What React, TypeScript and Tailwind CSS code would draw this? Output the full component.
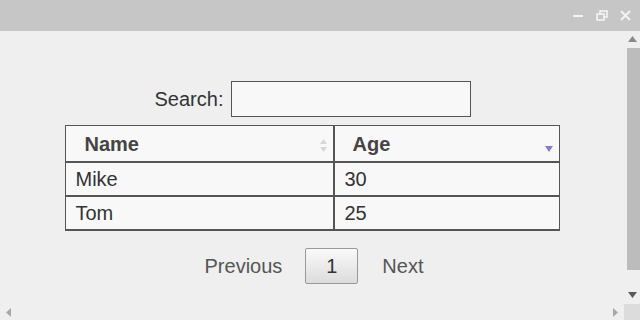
import React from "react";

const rows = [
  { name: "Mike", age: 30 },
  { name: "Tom", age: 25 },
];

function TitleBar() {
  return (
    <div className="flex h-[31px] items-center justify-end gap-[12px] bg-[#c6c6c6] pr-[9px]">
      <svg width="11" height="11" viewBox="0 0 11 11">
        <rect x="0" y="5" width="10" height="2" fill="#f4f4f4" />
      </svg>
      <svg width="12" height="11" viewBox="0 0 12 11">
        <rect x="4" y="1" width="7" height="6" fill="none" stroke="#f4f4f4" strokeWidth="1.6" />
        <rect x="1" y="4" width="7" height="6" fill="#c6c6c6" stroke="#f4f4f4" strokeWidth="1.6" />
      </svg>
      <svg width="11" height="11" viewBox="0 0 11 11">
        <path d="M1 1 L10 10 M10 1 L1 10" stroke="#f4f4f4" strokeWidth="2" />
      </svg>
    </div>
  );
}

function SortBoth() {
  return (
    <svg width="7" height="13" viewBox="0 0 7 13" className="absolute right-[6px] top-[13px]">
      <path d="M0 5 L3.5 0 L7 5 Z" fill="#d6d6d6" />
      <path d="M0 8 L3.5 13 L7 8 Z" fill="#d6d6d6" />
    </svg>
  );
}

function SortDesc() {
  return (
    <svg width="8" height="6" viewBox="0 0 8 6" className="absolute right-[6px] top-[20px]">
      <path d="M0 0 L8 0 L4 6 Z" fill="#7d7ddb" />
    </svg>
  );
}

export default function App() {
  return (
    <div
      className="flex h-[320px] w-[640px] flex-col overflow-hidden bg-[#efefef] text-[#333]"
      style={{ fontFamily: '"Liberation Sans", Arial, sans-serif' }}
    >
      <TitleBar />
      <div className="flex flex-1">
        <div className="flex flex-1 flex-col items-center pt-[50px]">
          <div className="ml-[2px] flex items-center gap-[8px] text-[20px]">
            <span>Search:</span>
            <input
              type="text"
              className="h-[36px] w-[240px] border border-[#555] bg-[#f8f8f8] outline-none"
            />
          </div>
          <table className="mt-[8px] w-[495px] border-separate border-spacing-0 text-[20px]">
            <thead>
              <tr className="h-[38px] bg-[#f8f8f8]">
                <th className="relative w-[269px] border-x border-t border-b-2 border-[#555] pl-[19px] text-left font-bold text-[#444]">
                  Name
                  <SortBoth />
                </th>
                <th className="relative border-l border-r border-t border-b-2 border-[#555] pl-[18px] text-left font-bold text-[#444]">
                  Age
                  <SortDesc />
                </th>
              </tr>
            </thead>
            <tbody>
              {rows.map((r) => (
                <tr key={r.name} className="h-[34px] bg-[#f8f8f8]">
                  <td className="border-x border-b-2 border-[#555] pl-[10px]">{r.name}</td>
                  <td className="border-x border-b-2 border-[#555] pl-[10px]">{r.age}</td>
                </tr>
              ))}
            </tbody>
          </table>
          <div className="ml-[4px] mt-[17px] flex items-center text-[20px] text-[#555]">
            <span className="mr-[23px]">Previous</span>
            <span className="flex h-[36px] w-[53px] items-center justify-center rounded-[2px] border border-[#999] bg-gradient-to-b from-[#fafafa] to-[#dcdcdc] text-[#333]">
              1
            </span>
            <span className="ml-[24px]">Next</span>
          </div>
        </div>
        <div className="flex w-[16px] flex-col items-center">
          <svg width="9" height="6" viewBox="0 0 9 6" className="mt-[5px]">
            <path d="M0 6 L4.5 0 L9 6 Z" fill="#8a8a8a" />
          </svg>
          <div className="ml-[3px] mt-[6px] h-[222px] w-[13px] bg-[#bcbcbc]" />
          <div className="flex-1" />
          <svg width="9" height="6" viewBox="0 0 9 6" className="mb-[6px]">
            <path d="M0 0 L9 0 L4.5 6 Z" fill="#5a5a5a" />
          </svg>
        </div>
      </div>
      <div className="flex h-[16px]">
        <div className="flex flex-1 items-center justify-between px-[6px]">
          <svg width="5" height="9" viewBox="0 0 5 9">
            <path d="M5 0 L0 4.5 L5 9 Z" fill="#a8a8a8" />
          </svg>
          <svg width="5" height="9" viewBox="0 0 5 9">
            <path d="M0 0 L5 4.5 L0 9 Z" fill="#a8a8a8" />
          </svg>
        </div>
        <div className="w-[16px] bg-[#dcdcdc]" />
      </div>
    </div>
  );
}
